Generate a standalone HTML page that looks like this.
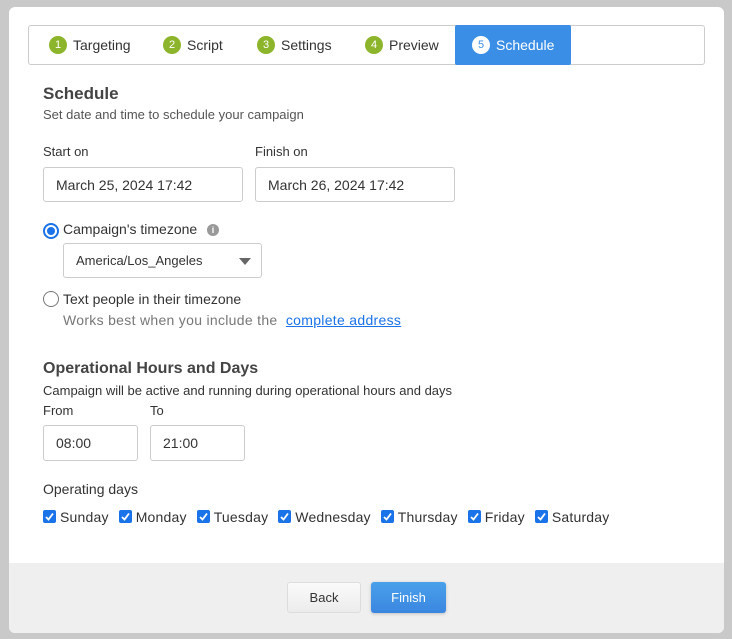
<!DOCTYPE html>
<html><head><style>
*{box-sizing:border-box;margin:0;padding:0}
body{width:732px;height:639px;background:#c9c9c9;font-family:"Liberation Sans",sans-serif;color:#333;position:relative;overflow:hidden}
.panel{position:absolute;left:9px;top:7px;width:715px;height:626px;background:#fff;border-radius:6px;overflow:hidden}
.a{position:absolute;white-space:nowrap}
.tabs{position:absolute;left:19px;top:18px;width:677px;height:40px;border:1px solid #ccc;border-radius:3px}
.tab{position:absolute;top:0;height:38px;display:flex;align-items:center;font-size:14px;color:#333}
.num{width:18px;height:18px;border-radius:50%;background:#8db52b;color:#fff;font-size:11px;display:flex;align-items:center;justify-content:center;margin-right:6px}
.active{background:#3a8ee6;color:#fff;top:-1px;height:40px;border-radius:2px}
.active .num{background:#fff;color:#3a8ee6}
.inp{position:absolute;border:1px solid #ccc;border-radius:3px;font-size:14px;padding-left:12px;display:flex;align-items:center;color:#333}
.t14{font-size:14px}.t13{font-size:13px}
.radio{position:absolute;width:16px;height:16px;border-radius:50%;border:1px solid #777;background:#fff}
.cb{display:inline-flex;align-items:center;font-size:14px;margin-right:10px;letter-spacing:0.2px}
.cb i{width:13px;height:13px;background:#1a73e8;border-radius:2px;margin-right:4px;display:inline-flex;align-items:center;justify-content:center}
.foot{position:absolute;left:0;top:556px;width:715px;height:70px;background:#efefef}
.btn{position:absolute;top:19px;height:31px;border-radius:3px;font-size:13px;display:flex;align-items:center;justify-content:center}
</style></head><body>
<div class="panel">
<div class="tabs">
<div class="tab" style="left:20px"><span class="num">1</span>Targeting</div>
<div class="tab" style="left:134px"><span class="num">2</span>Script</div>
<div class="tab" style="left:228px"><span class="num">3</span>Settings</div>
<div class="tab" style="left:336px"><span class="num">4</span>Preview</div>
<div class="tab active" style="left:426px;width:116px;padding-left:17px"><span class="num">5</span>Schedule</div>
</div>
<div class="a" style="left:34px;top:77px;font-size:17px;font-weight:bold;color:#444">Schedule</div>
<div class="a t13" style="left:34px;top:100px;color:#555">Set date and time to schedule your campaign</div>
<div class="a t13" style="left:34px;top:137px">Start on</div>
<div class="a t13" style="left:246px;top:137px">Finish on</div>
<div class="inp" style="left:34px;top:160px;width:200px;height:35px">March 25, 2024 17:42</div>
<div class="inp" style="left:246px;top:160px;width:200px;height:35px">March 26, 2024 17:42</div>
<div class="radio" style="left:34px;top:216px;border:2px solid #1a73e8"><div style="position:absolute;left:2px;top:2px;width:8px;height:8px;border-radius:50%;background:#1a73e8"></div></div>
<div class="a t14" style="left:54px;top:214px">Campaign's timezone</div>
<div class="a" style="left:198px;top:217px;width:12px;height:12px;border-radius:50%;background:#999;color:#fff;font-size:9px;text-align:center;line-height:12px;font-weight:bold">i</div>
<div class="inp" style="left:54px;top:236px;width:199px;height:35px;font-size:13px">America/Los_Angeles
<div style="position:absolute;right:10px;top:14px;border-left:6px solid transparent;border-right:6px solid transparent;border-top:7px solid #666"></div></div>
<div class="radio" style="left:34px;top:284px"></div>
<div class="a t14" style="left:54px;top:284px">Text people in their timezone</div>
<div class="a t14" style="left:54px;top:305px;color:#777;letter-spacing:0.3px">Works best when you include the &nbsp;<span style="color:#1a73e8;text-decoration:underline">complete address</span></div>
<div class="a" style="left:34px;top:353px;font-size:16px;font-weight:bold;color:#444">Operational Hours and Days</div>
<div class="a t13" style="left:34px;top:376px">Campaign will be active and running during operational hours and days</div>
<div class="a t13" style="left:34px;top:396px">From</div>
<div class="a t13" style="left:141px;top:396px">To</div>
<div class="inp" style="left:34px;top:418px;width:95px;height:36px">08:00</div>
<div class="inp" style="left:141px;top:418px;width:95px;height:36px">21:00</div>
<div class="a t14" style="left:34px;top:474px">Operating days</div>
<div class="a" style="left:34px;top:501px">
<span class="cb"><i><svg width="9" height="9" viewBox="0 0 9 9"><path d="M1 5l2.5 2.5L8 1.5" stroke="#fff" stroke-width="1.8" fill="none"/></svg></i>Sunday</span><span class="cb"><i><svg width="9" height="9" viewBox="0 0 9 9"><path d="M1 5l2.5 2.5L8 1.5" stroke="#fff" stroke-width="1.8" fill="none"/></svg></i>Monday</span><span class="cb"><i><svg width="9" height="9" viewBox="0 0 9 9"><path d="M1 5l2.5 2.5L8 1.5" stroke="#fff" stroke-width="1.8" fill="none"/></svg></i>Tuesday</span><span class="cb"><i><svg width="9" height="9" viewBox="0 0 9 9"><path d="M1 5l2.5 2.5L8 1.5" stroke="#fff" stroke-width="1.8" fill="none"/></svg></i>Wednesday</span><span class="cb"><i><svg width="9" height="9" viewBox="0 0 9 9"><path d="M1 5l2.5 2.5L8 1.5" stroke="#fff" stroke-width="1.8" fill="none"/></svg></i>Thursday</span><span class="cb"><i><svg width="9" height="9" viewBox="0 0 9 9"><path d="M1 5l2.5 2.5L8 1.5" stroke="#fff" stroke-width="1.8" fill="none"/></svg></i>Friday</span><span class="cb"><i><svg width="9" height="9" viewBox="0 0 9 9"><path d="M1 5l2.5 2.5L8 1.5" stroke="#fff" stroke-width="1.8" fill="none"/></svg></i>Saturday</span>
</div>
<div class="foot">
<div class="btn" style="left:278px;width:74px;background:linear-gradient(#fafafa,#ececec);border:1px solid #ddd;color:#333">Back</div>
<div class="btn" style="left:362px;width:75px;background:linear-gradient(#4aa0ea,#3a86e0);color:#fff;box-shadow:0 1px 3px rgba(0,0,0,.2)">Finish</div>
</div>
</div>
</body></html>
